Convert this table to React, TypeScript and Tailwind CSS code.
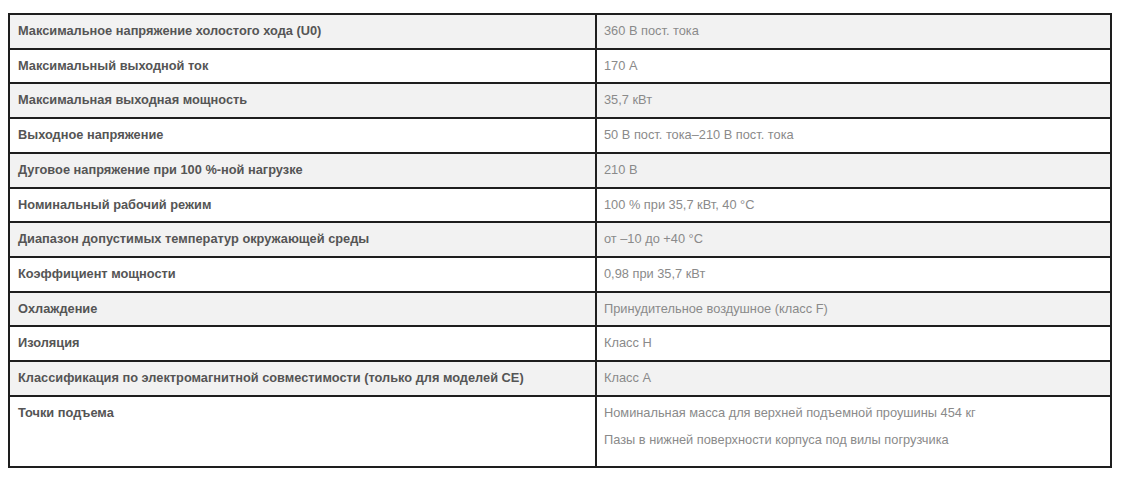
const rows: [string, string[]][] = [
  ['Максимальное напряжение холостого хода (U0)', ['360 В пост. тока']],
  ['Максимальный выходной ток', ['170 А']],
  ['Максимальная выходная мощность', ['35,7 кВт']],
  ['Выходное напряжение', ['50 В пост. тока–210 В пост. тока']],
  ['Дуговое напряжение при 100 %-ной нагрузке', ['210 В']],
  ['Номинальный рабочий режим', ['100 % при 35,7 кВт, 40 °C']],
  ['Диапазон допустимых температур окружающей среды', ['от –10 до +40 °C']],
  ['Коэффициент мощности', ['0,98 при 35,7 кВт']],
  ['Охлаждение', ['Принудительное воздушное (класс F)']],
  ['Изоляция', ['Класс H']],
  ['Классификация по электромагнитной совместимости (только для моделей CE)', ['Класс А']],
  [
    'Точки подъема',
    [
      'Номинальная масса для верхней подъемной проушины 454 кг',
      'Пазы в нижней поверхности корпуса под вилы погрузчика',
    ],
  ],
];

export default function App() {
  return (
    <div className="min-h-screen bg-white pl-[8px] pt-[13px] font-['Liberation_Sans',Arial,sans-serif] text-[12.8px]">
      <table className="w-[1104px] border-collapse border-2 border-[#1e1e1e]">
        <tbody>
          {rows.map(([label, values], i) => (
            <tr key={label} className={i % 2 === 0 ? 'bg-[#f2f2f2]' : 'bg-white'}>
              <td className="w-[587px] border-2 border-[#1e1e1e] px-[8px] py-[8px] align-top font-bold leading-[16.7px] text-[#555555]">
                {label}
              </td>
              <td className="border-2 border-[#1e1e1e] px-[7px] py-[8px] align-top leading-[16.7px] text-[#8a8a8a]">
                {values.length === 1 ? (
                  values[0]
                ) : (
                  values.map((v, j) => (
                    <p key={v} className={j === values.length - 1 ? 'mb-[9px]' : 'mb-[11px]'}>
                      {v}
                    </p>
                  ))
                )}
              </td>
            </tr>
          ))}
        </tbody>
      </table>
    </div>
  );
}
